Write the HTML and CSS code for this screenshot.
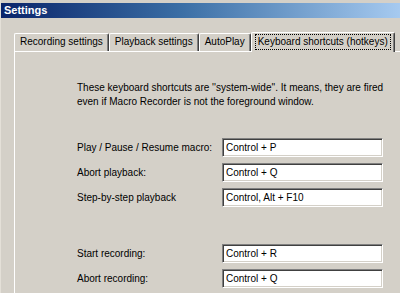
FILE: index.html
```html
<!DOCTYPE html>
<html lang="en">
<head>
    <meta charset="UTF-8">
    <title>Settings</title>
    <link rel="stylesheet" href="styles.css">
</head>
<body>
    <div class="window">
        <div class="titlebar">Settings</div>

        <div class="tabs">
            <div class="tab">Recording settings</div>
            <div class="tab">Playback settings</div>
            <div class="tab">AutoPlay</div>
            <div class="tab active"><span class="focus">Keyboard shortcuts (hotkeys)</span></div>
        </div>

        <div class="panel">
            <p class="intro">
                These keyboard shortcuts are ''system-wide''. It means, they are fired<br>
                even if Macro Recorder is not the foreground window.
            </p>

            <div class="group">
                <div class="row">
                    <span class="label">Play / Pause / Resume macro:</span>
                    <div class="hotkey">Control + P</div>
                </div>
                <div class="row">
                    <span class="label">Abort playback:</span>
                    <div class="hotkey">Control + Q</div>
                </div>
                <div class="row">
                    <span class="label">Step-by-step playback</span>
                    <div class="hotkey">Control, Alt + F10</div>
                </div>
            </div>

            <div class="group">
                <div class="row">
                    <span class="label">Start recording:</span>
                    <div class="hotkey">Control + R</div>
                </div>
                <div class="row">
                    <span class="label">Abort recording:</span>
                    <div class="hotkey">Control + Q</div>
                </div>
            </div>
        </div>
    </div>
</body>
</html>
```

FILE: styles.css
```css
* {
    margin: 0;
    padding: 0;
    box-sizing: border-box;
}

body {
    font-family: "Liberation Sans", Arial, sans-serif;
    font-size: 10px;
    color: #000;
    background: #d4d0c8;
    overflow: hidden;
}

.window {
    height: 293px;
    overflow: hidden;
    padding-top: 3px;
    border-left: 1px solid #e4e0d8;
}

.titlebar {
    height: 15px;
    padding-left: 3px;
    line-height: 15px;
    font-weight: bold;
    font-size: 11px;
    color: #fff;
    background: linear-gradient(to right, #0a246a 0%, #3a6ea5 45%, #a6caf0 100%);
}

.tabs {
    display: flex;
    align-items: flex-end;
    height: 33px;
    margin-left: 13px;
    position: relative;
    z-index: 1;
    white-space: nowrap;
}

.tab {
    height: 18px;
    padding: 0 5px;
    line-height: 16px;
    border: 1px solid #fff;
    border-bottom: none;
    border-right-color: #404040;
    box-shadow: inset -1px 0 #808080;
    border-radius: 2px 2px 0 0;
}

.tab.active {
    height: 20px;
    margin-bottom: -1px;
    padding: 2px 4px 0 4px;
    background: #d4d0c8;
}

.focus {
    display: block;
    padding: 0 2px;
    line-height: 14px;
    outline: 1px dotted #000;
}

.panel {
    margin-left: 13px;
    height: 242px;
    border-top: 1px solid #fff;
    border-left: 1px solid #fff;
    padding: 29px 0 0 62px;
}

.intro {
    line-height: 14px;
    margin-bottom: 29px;
    white-space: nowrap;
}

.group {
    display: flex;
    flex-direction: column;
    gap: 6px;
    margin-bottom: 37px;
}

.row {
    display: flex;
    align-items: center;
}

.label {
    width: 145px;
    white-space: nowrap;
}

.hotkey {
    width: 161px;
    height: 19px;
    padding-left: 3px;
    line-height: 17px;
    background: #fff;
    border: 1px solid;
    border-color: #808080 #fff #fff #808080;
    box-shadow: inset 1px 1px #404040, inset -1px -1px #d4d0c8;
}
```
